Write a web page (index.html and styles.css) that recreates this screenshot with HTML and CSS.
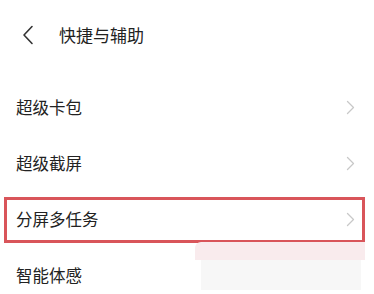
FILE: index.html
```html
<!DOCTYPE html>
<html lang="zh">
<head>
<meta charset="utf-8">
<link rel="stylesheet" href="styles.css">
</head>
<body>
<div class="page">
  <header class="header">
    <svg class="back" width="12" height="20" viewBox="0 0 12 20"><path d="M10 1.5 L2 10 L10 18.5" fill="none" stroke="#333" stroke-width="1.6" stroke-linecap="round" stroke-linejoin="round"/></svg>
    <span class="title">快捷与辅助</span>
  </header>
  <ul class="list">
    <li class="row"><span class="label">超级卡包</span><svg class="chev" width="9" height="15" viewBox="0 0 9 15"><path d="M1.5 1.5 L7.5 7.5 L1.5 13.5" fill="none" stroke="#c8c8c8" stroke-width="1.3" stroke-linecap="round" stroke-linejoin="round"/></svg></li>
    <li class="row"><span class="label">超级截屏</span><svg class="chev" width="9" height="15" viewBox="0 0 9 15"><path d="M1.5 1.5 L7.5 7.5 L1.5 13.5" fill="none" stroke="#c8c8c8" stroke-width="1.3" stroke-linecap="round" stroke-linejoin="round"/></svg></li>
    <li class="row highlight"><span class="label">分屏多任务</span><svg class="chev" width="9" height="15" viewBox="0 0 9 15"><path d="M1.5 1.5 L7.5 7.5 L1.5 13.5" fill="none" stroke="#c8c8c8" stroke-width="1.3" stroke-linecap="round" stroke-linejoin="round"/></svg></li>
    <li class="row"><span class="label">智能体感</span></li>
  </ul>
  <div class="mark"><div class="mark-pink"></div><div class="mark-gray"></div></div>
</div>
</body>
</html>
```
FILE: styles.css
```css
html, body {
  margin: 0;
  padding: 0;
  background: #fff;
}
.page {
  position: relative;
  width: 374px;
  height: 294px;
  overflow: hidden;
  font-family: "Noto Sans CJK SC", "Noto Sans", sans-serif;
  color: #222;
}
.header {
  height: 70px;
  display: flex;
  align-items: center;
  padding-left: 22px;
}
.back {
  display: block;
}
.title {
  margin-left: 25px;
  font-size: 17px;
  line-height: 20px;
}
.list {
  list-style: none;
  margin: 0;
  padding: 9px 0 0 0;
}
.row {
  position: relative;
  height: 56px;
  display: flex;
  align-items: center;
  justify-content: space-between;
  padding: 0 19px 0 16px;
}
.label {
  font-size: 16.5px;
  line-height: 20px;
}
.chev {
  display: block;
}
.highlight::after {
  content: "";
  position: absolute;
  left: 4px;
  top: 6px;
  width: 355px;
  height: 40px;
  border: 3px solid #d9555a;
}
.mark {
  position: absolute;
  left: 195px;
  top: 242px;
  width: 170px;
}
.mark-pink {
  height: 18px;
  background: #f9ebed;
  border-radius: 6px 0 0 0;
}
.mark-gray {
  height: 30px;
  margin: 0 4px 0 6px;
  background: #f7f7f7;
}
```
